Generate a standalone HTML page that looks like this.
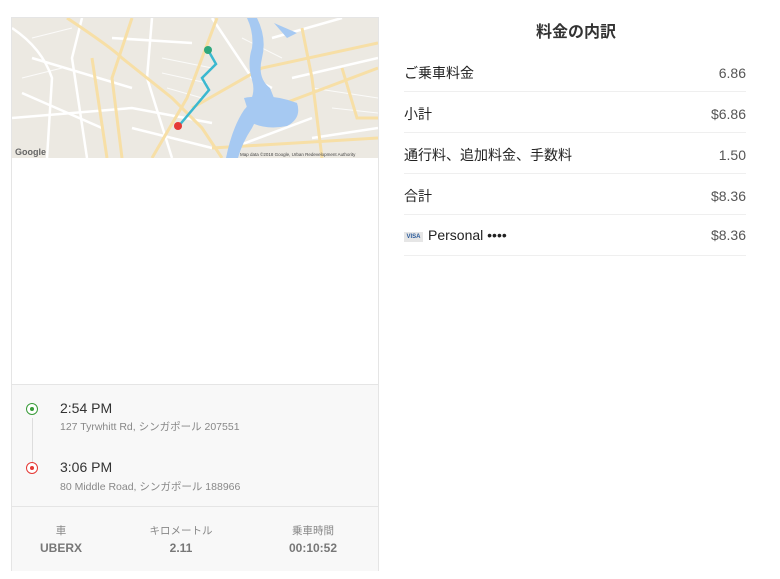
<!DOCTYPE html>
<html><head><meta charset="utf-8"><style>
body{margin:0;width:780px;height:579px;background:#fff;font-family:"Liberation Sans","Noto Sans CJK JP",sans-serif;position:relative;overflow:hidden}
.card{position:absolute;left:11px;top:17px;width:366px;height:552px;border:1px solid #e5e5e5;background:#fff}
.map{position:absolute;left:0;top:0;width:366px;height:140px}
.bottom{position:absolute;left:0;top:366px;width:366px;height:186px;background:#f8f8f8;border-top:1px solid #e5e5e5}
.t{position:absolute;left:48px;font-size:14px;color:#333}
.a{position:absolute;left:48px;font-size:10.5px;color:#888}
.dot{position:absolute;left:14px;width:12px;height:12px;border-radius:50%;background:#fff;box-sizing:border-box;border:1.5px solid}
.dot i{position:absolute;left:2.5px;top:2.5px;width:4px;height:4px;border-radius:50%}
.vl{position:absolute;left:20px;top:33px;width:1px;height:50px;background:#ddd}
.sep{position:absolute;left:0;top:121px;width:366px;height:1px;background:#e5e5e5}
.st{position:absolute;top:138px;width:120px;text-align:center}
.st .l{font-size:10.5px;color:#888}
.st .v{font-size:12px;font-weight:bold;color:#777;margin-top:3px}
.title{position:absolute;left:396px;width:360px;top:18px;text-align:center;font-size:16px;font-weight:bold;color:#333}
.row{position:absolute;left:404px;width:342px;height:40px;border-bottom:1px solid #efefef;font-size:14px;color:#222;display:flex;justify-content:space-between;align-items:baseline;padding-top:11px;box-sizing:border-box}
.row .r{color:#555}
</style></head><body>
<div class="card">
<svg class="map" viewBox="0 0 366 140" width="366" height="140">
<rect width="366" height="140" fill="#ece9e2"/>
<g fill="none" stroke="#fff" stroke-width="2.5">
<path d="M0 10 Q30 30 40 60 L35 140"/><path d="M0 100 L120 90 L200 105"/><path d="M20 40 L120 70"/>
<path d="M70 0 L60 40 L75 140"/><path d="M140 0 L135 60 L160 140"/><path d="M200 0 L240 60 L260 70"/>
<path d="M260 20 L330 0"/><path d="M280 60 L366 40"/><path d="M300 120 L366 110"/><path d="M10 75 L90 110"/>
<path d="M220 130 L300 100"/><path d="M100 20 L180 25"/><path d="M120 110 L200 130"/>
</g>
<g fill="none" stroke="#fff" stroke-width="1" opacity=".8">
<path d="M150 40 L200 50 M150 55 L195 65 M155 70 L190 80 M20 20 L60 10 M10 60 L50 50 M300 70 L366 80 M320 90 L366 95 M230 20 L270 40"/>
</g>
<g fill="none" stroke="#f7dfa6" stroke-width="3">
<path d="M55 0 Q100 30 110 40 L160 80 L190 110 L210 140"/>
<path d="M120 0 L100 60 L110 140"/>
<path d="M205 0 L175 80 L140 140"/>
<path d="M180 90 L250 50 L366 25"/>
<path d="M200 130 L366 120"/>
<path d="M260 90 L366 50"/>
<path d="M80 40 L95 140"/>
<path d="M330 50 L345 100 L366 100"/>
<path d="M290 10 L300 60 L310 140"/>
</g>
<path d="M245 0 Q255 20 250 40 Q245 60 258 70 L262 80 Q250 90 240 110 Q230 125 226 140 L214 140 Q220 110 232 92 Q245 78 240 62 Q235 45 240 30 Q242 15 235 0Z" fill="#a6c9f2"/>
<path d="M232 80 Q260 75 285 85 Q290 100 275 108 Q255 112 240 105Z" fill="#a6c9f2"/>
<path d="M262 5 L285 15 L275 20Z" fill="#a6c9f2"/>
<polyline points="196,32 204,46 190,60 197,72 165,110" fill="none" stroke="#3bb8d0" stroke-width="2.5"/>
<circle cx="196" cy="32" r="4" fill="#2fa77c"/>
<circle cx="166" cy="108" r="4" fill="#e53935"/>
<text x="3" y="137" font-size="9" font-weight="bold" fill="#666" font-family="Liberation Sans">Google</text>
<text x="228" y="138" font-size="4.5" fill="#444" font-family="Liberation Sans">Map data ©2018 Google, Urban Redevelopment Authority</text>
</svg>
<div class="bottom">
<div class="vl"></div>
<div class="dot" style="top:18px;border-color:#3a9c3a"><i style="background:#3a9c3a"></i></div>
<div class="t" style="top:15px">2:54 PM</div>
<div class="a" style="top:34px">127 Tyrwhitt Rd, シンガポール 207551</div>
<div class="dot" style="top:77px;border-color:#e53935"><i style="background:#e53935"></i></div>
<div class="t" style="top:74px">3:06 PM</div>
<div class="a" style="top:94px">80 Middle Road, シンガポール 188966</div>
<div class="sep"></div>
<div class="st" style="left:-11px"><div class="l">車</div><div class="v">UBERX</div></div>
<div class="st" style="left:109px"><div class="l">キロメートル</div><div class="v">2.11</div></div>
<div class="st" style="left:241px"><div class="l">乗車時間</div><div class="v">00:10:52</div></div>
</div>
</div>
<div class="title">料金の内訳</div>
<div class="row" style="top:52px"><span>ご乗車料金</span><span class="r">6.86</span></div>
<div class="row" style="top:93px"><span>小計</span><span class="r">$6.86</span></div>
<div class="row" style="top:134px"><span>通行料、追加料金、手数料</span><span class="r">1.50</span></div>
<div class="row" style="top:175px"><span>合計</span><span class="r">$8.36</span></div>
<div class="row" style="top:216px"><span><b style="display:inline-block;width:19px;height:10px;background:#e6e6e6;color:#2a5a9a;font-size:6px;line-height:10px;text-align:center;vertical-align:2px;margin-right:5px">VISA</b>Personal ••••</span><span class="r">$8.36</span></div>
</body></html>
